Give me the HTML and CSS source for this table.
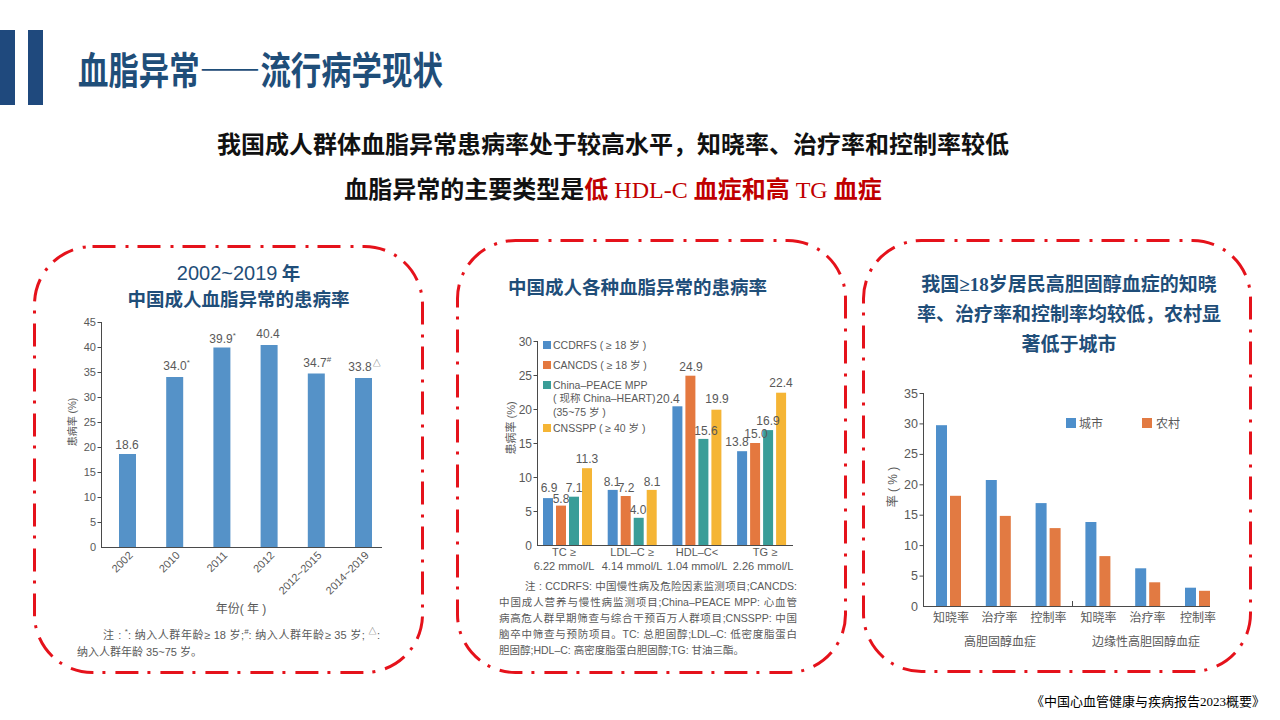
FILE: index.html
```html
<!DOCTYPE html>
<html lang="zh-CN">
<head>
<meta charset="utf-8">
<title>血脂异常——流行病学现状</title>
<link rel="stylesheet" href="styles.css">
</head>
<body>
<div class="slide">
  <header class="head">
    <span class="bar"></span><span class="bar"></span>
    <h1>血脂异常——流行病学现状</h1>
  </header>

  <div class="summary">
    <p>我国成人群体血脂异常患病率处于较高水平，知晓率、治疗率和控制率较低</p>
    <p>血脂异常的主要类型是<span class="red">低 <span class="lat">HDL-C</span> 血症和高 <span class="lat">TG</span> 血症</span></p>
  </div>

  <div class="panels">
    <!-- Panel 1 -->
    <section class="panel p1">
      <svg class="frame" width="391" height="429" viewBox="0 0 391 429"><rect x="1.5" y="1.5" width="388" height="426" rx="58"/></svg>
      <h2><span class="yr">2002~2019</span> 年<br>中国成人血脂异常的患病率</h2>
      <svg class="chart" width="391" height="315" viewBox="33 312 391 315">
        <g class="axis">
          <line x1="101.5" y1="322" x2="101.5" y2="548"/>
          <line x1="101" y1="547.5" x2="382" y2="547.5"/>
          <line x1="97.5" y1="322.5" x2="101.5" y2="322.5"/>
          <line x1="97.5" y1="347.5" x2="101.5" y2="347.5"/>
          <line x1="97.5" y1="372.5" x2="101.5" y2="372.5"/>
          <line x1="97.5" y1="397.5" x2="101.5" y2="397.5"/>
          <line x1="97.5" y1="422.5" x2="101.5" y2="422.5"/>
          <line x1="97.5" y1="447.5" x2="101.5" y2="447.5"/>
          <line x1="97.5" y1="472.5" x2="101.5" y2="472.5"/>
          <line x1="97.5" y1="497.5" x2="101.5" y2="497.5"/>
          <line x1="97.5" y1="522.5" x2="101.5" y2="522.5"/>
        </g>
        <g class="yt s11" text-anchor="end">
          <text x="96" y="326">45</text>
          <text x="96" y="351">40</text>
          <text x="96" y="376">35</text>
          <text x="96" y="401">30</text>
          <text x="96" y="426">25</text>
          <text x="96" y="451">20</text>
          <text x="96" y="476">15</text>
          <text x="96" y="501">10</text>
          <text x="96" y="526">5</text>
          <text x="96" y="551">0</text>
        </g>
        <g class="b-left">
          <rect x="119" y="454" width="17" height="93"/>
          <rect x="166.2" y="377" width="17" height="170"/>
          <rect x="213.4" y="347.5" width="17" height="199.5"/>
          <rect x="260.6" y="345" width="17" height="202"/>
          <rect x="307.8" y="373.5" width="17" height="173.5"/>
          <rect x="355" y="378" width="17" height="169"/>
        </g>
        <g class="val s12">
          <text x="115.3" y="448.5">18.6</text>
          <text x="163.3" y="369.5">34.0<tspan class="sup" dy="-5">*</tspan></text>
          <text x="209.3" y="342.5">39.9<tspan class="sup" dy="-5">*</tspan></text>
          <text x="256.3" y="337.5">40.4</text>
          <text x="303.3" y="366.5">34.7<tspan class="sup" dy="-5">#</tspan></text>
          <text x="348.3" y="370.5">33.8<tspan class="sup" dx="1" dy="-5">△</tspan></text>
        </g>
        <g class="xl s11" text-anchor="end">
          <text transform="translate(133.5 556) rotate(-45)">2002</text>
          <text transform="translate(180.7 556) rotate(-45)">2010</text>
          <text transform="translate(228 556) rotate(-45)">2011</text>
          <text transform="translate(275.1 556) rotate(-45)">2012</text>
          <text transform="translate(322.3 556) rotate(-45)">2012~2015</text>
          <text transform="translate(369.5 556) rotate(-45)">2014~2019</text>
        </g>
        <text class="s12" x="241" y="613" text-anchor="middle">年份( 年 )</text>
        <text class="s10" x="72" y="422" dy="3.5" text-anchor="middle" transform="rotate(-90 72 422)">患病率 (%)</text>
      </svg>
      <p class="note n1">
        <span class="ln first">注 : <sup>*</sup>: 纳入人群年龄≥ 18 岁;<sup>#</sup>: 纳入人群年龄≥ 35 岁; <sup>△</sup>:</span>
        <span class="ln last">纳入人群年龄 35~75 岁。</span>
      </p>
    </section>

    <!-- Panel 2 -->
    <section class="panel p2">
      <svg class="frame" width="391" height="435" viewBox="0 0 391 435"><rect x="1.5" y="1.5" width="388" height="432" rx="58"/></svg>
      <h2>中国成人各种血脂异常的患病率</h2>
      <svg class="chart" width="391" height="245" viewBox="456 330 391 245">
        <g class="axis">
          <line x1="537.5" y1="342" x2="537.5" y2="547"/>
          <line x1="537" y1="546.5" x2="793" y2="546.5"/>
          <line x1="533.5" y1="342.5" x2="537.5" y2="342.5"/>
          <line x1="533.5" y1="376.5" x2="537.5" y2="376.5"/>
          <line x1="533.5" y1="410.5" x2="537.5" y2="410.5"/>
          <line x1="533.5" y1="444.5" x2="537.5" y2="444.5"/>
          <line x1="533.5" y1="478.5" x2="537.5" y2="478.5"/>
          <line x1="533.5" y1="512.5" x2="537.5" y2="512.5"/>
        </g>
        <g class="yt s12" text-anchor="end">
          <text x="532" y="346.5">30</text>
          <text x="532" y="380.5">25</text>
          <text x="532" y="414.5">20</text>
          <text x="532" y="448.5">15</text>
          <text x="532" y="482.5">10</text>
          <text x="532" y="516.5">5</text>
          <text x="532" y="550.5">0</text>
        </g>
        <g class="c-blue">
          <rect x="543" y="499.1" width="10" height="46.9"/>
          <rect x="607.7" y="490.9" width="10" height="55.1"/>
          <rect x="672.4" y="407.3" width="10" height="138.7"/>
          <rect x="737.1" y="452.2" width="10" height="93.8"/>
        </g>
        <g class="c-orange">
          <rect x="556" y="506.6" width="10" height="39.4"/>
          <rect x="620.7" y="497" width="10" height="49"/>
          <rect x="685.4" y="376.7" width="10" height="169.3"/>
          <rect x="750.1" y="444" width="10" height="102"/>
        </g>
        <g class="c-teal">
          <rect x="569" y="497.7" width="10" height="48.3"/>
          <rect x="633.7" y="518.8" width="10" height="27.2"/>
          <rect x="698.4" y="439.9" width="10" height="106.1"/>
          <rect x="763.1" y="431.1" width="10" height="114.9"/>
        </g>
        <g class="c-yellow">
          <rect x="582" y="469.2" width="10" height="76.8"/>
          <rect x="646.7" y="490.9" width="10" height="55.1"/>
          <rect x="711.4" y="410.7" width="10" height="135.3"/>
          <rect x="776.1" y="393.7" width="10" height="152.3"/>
        </g>
        <g class="val s12" text-anchor="middle">
          <text x="549" y="493.3">6.9</text>
          <text x="561" y="504.3">5.8</text>
          <text x="574" y="493.3">7.1</text>
          <text x="587" y="464.3">11.3</text>
          <text x="612" y="487.3">8.1</text>
          <text x="626" y="493.3">7.2</text>
          <text x="638" y="515.3">4.0</text>
          <text x="652" y="487.3">8.1</text>
          <text x="668" y="404.3">20.4</text>
          <text x="691" y="372.3">24.9</text>
          <text x="706" y="436.3">15.6</text>
          <text x="717" y="404.3">19.9</text>
          <text x="737" y="447.3">13.8</text>
          <text x="756" y="439">15.0</text>
          <text x="768" y="426">16.9</text>
          <text x="781" y="388.3">22.4</text>
        </g>
        <g class="legend s105">
          <rect class="c-blue" x="543" y="342" width="8" height="8"/>
          <text x="553" y="350">CCDRFS ( ≥ 18 岁 )</text>
          <rect class="c-orange" x="543" y="362" width="8" height="8"/>
          <text x="553" y="370">CANCDS ( ≥ 18 岁 )</text>
          <rect class="c-teal" x="543" y="382" width="8" height="8"/>
          <text x="553" y="390">China–PEACE MPP</text>
          <text x="553" y="403">( 现称 China–HEART)</text>
          <text x="553" y="417">(35~75 岁 )</text>
          <rect class="c-yellow" x="543" y="425" width="8" height="8"/>
          <text x="553" y="433">CNSSPP ( ≥ 40 岁 )</text>
        </g>
        <g class="xl s11" text-anchor="middle">
          <text x="564" y="557">TC ≥</text>
          <text x="564" y="571">6.22 mmol/L</text>
          <text x="632" y="557">LDL–C ≥</text>
          <text x="632" y="571">4.14 mmol/L</text>
          <text x="697" y="557">HDL–C&lt;</text>
          <text x="697" y="571">1.04 mmol/L</text>
          <text x="765" y="557">TG ≥</text>
          <text x="763" y="571">2.26 mmol/L</text>
        </g>
        <text class="s11" x="511" y="429" dy="4" text-anchor="middle" transform="rotate(-90 511 429)">患病率 (%)</text>
      </svg>
      <p class="note n2">
        <span class="ln first">注 : CCDRFS: 中国慢性病及危险因素监测项目;CANCDS:</span>
        <span class="ln">中国成人营养与慢性病监测项目;China–PEACE MPP: 心血管</span>
        <span class="ln">病高危人群早期筛查与综合干预百万人群项目;CNSSPP: 中国</span>
        <span class="ln">脑卒中筛查与预防项目。TC: 总胆固醇;LDL–C: 低密度脂蛋白</span>
        <span class="ln last">胆固醇;HDL–C: 高密度脂蛋白胆固醇;TG: 甘油三酯。</span>
      </p>
    </section>

    <!-- Panel 3 -->
    <section class="panel p3">
      <svg class="frame" width="390" height="434" viewBox="0 0 390 434"><rect x="1.5" y="1.5" width="387" height="431" rx="58"/></svg>
      <h2>我国≥18岁居民高胆固醇血症的知晓<br>率、治疗率和控制率均较低，农村显<br>著低于城市</h2>
      <svg class="chart" width="390" height="270" viewBox="862 380 390 270">
        <g class="axis">
          <line x1="923.5" y1="394" x2="923.5" y2="608"/>
          <line x1="923" y1="607.5" x2="1210" y2="607.5"/>
          <line x1="919.5" y1="394.5" x2="923.5" y2="394.5"/>
          <line x1="919.5" y1="424.9" x2="923.5" y2="424.9"/>
          <line x1="919.5" y1="455.4" x2="923.5" y2="455.4"/>
          <line x1="919.5" y1="485.8" x2="923.5" y2="485.8"/>
          <line x1="919.5" y1="516.2" x2="923.5" y2="516.2"/>
          <line x1="919.5" y1="546.6" x2="923.5" y2="546.6"/>
          <line x1="919.5" y1="577.1" x2="923.5" y2="577.1"/>
          <line x1="1072.5" y1="602" x2="1072.5" y2="607"/>
        </g>
        <g class="yt s125" text-anchor="end">
          <text x="918" y="398.5">35</text>
          <text x="918" y="428.9">30</text>
          <text x="918" y="459.4">25</text>
          <text x="918" y="489.8">20</text>
          <text x="918" y="520.2">15</text>
          <text x="918" y="550.6">10</text>
          <text x="918" y="581.1">5</text>
          <text x="918" y="611.5">0</text>
        </g>
        <g class="r-blue">
          <rect x="936" y="426.2" width="11" height="180.8"/>
          <rect x="985.8" y="481" width="11" height="126"/>
          <rect x="1035.6" y="504.1" width="11" height="102.9"/>
          <rect x="1085.4" y="523" width="11" height="84"/>
          <rect x="1135.2" y="569.3" width="11" height="37.7"/>
          <rect x="1185" y="588.7" width="11" height="18.3"/>
        </g>
        <g class="r-orange">
          <rect x="950" y="496.8" width="11" height="110.2"/>
          <rect x="999.8" y="516.9" width="11" height="90.1"/>
          <rect x="1049.6" y="529.1" width="11" height="77.9"/>
          <rect x="1099.4" y="557.1" width="11" height="49.9"/>
          <rect x="1149.2" y="583.3" width="11" height="23.7"/>
          <rect x="1199" y="591.8" width="11" height="15.2"/>
        </g>
        <rect class="r-blue" x="1066" y="419" width="10" height="10"/>
        <text class="s12" x="1079" y="428.5">城市</text>
        <rect class="r-orange" x="1142" y="419" width="10" height="10"/>
        <text class="s12" x="1156" y="428.5">农村</text>
        <g class="xl s12" text-anchor="middle">
          <text x="951" y="622.5">知晓率</text>
          <text x="999.5" y="622.5">治疗率</text>
          <text x="1048.5" y="622.5">控制率</text>
          <text x="1098.5" y="622.5">知晓率</text>
          <text x="1147.5" y="622.5">治疗率</text>
          <text x="1198" y="622.5">控制率</text>
          <text x="1000" y="646.5">高胆固醇血症</text>
          <text x="1146" y="646.5">边缘性高胆固醇血症</text>
        </g>
        <text class="s12" x="893" y="488" dy="4" text-anchor="middle" transform="rotate(-90 893 488)">率 ( % )</text>
      </svg>
    </section>
  </div>

  <footer class="source">《中国心血管健康与疾病报告2023概要》</footer>
</div>
</body>
</html>
```

FILE: styles.css
```css
* {
  box-sizing: border-box;
  margin: 0;
  padding: 0;
}

html,
body {
  width: 1280px;
  height: 720px;
  overflow: hidden;
  background: #ffffff;
}

body {
  font-family: "Noto Sans CJK SC", sans-serif;
  color: #000000;
}

.slide {
  width: 1280px;
  height: 720px;
}

/* ---------- header ---------- */
.head {
  display: flex;
  align-items: center;
  height: 75px;
  margin-top: 30px;
}

.head .bar {
  width: 15px;
  height: 75px;
  background: #1f497d;
}

.head .bar + .bar {
  margin-left: 13px;
}

.head h1 {
  margin-left: 35px;
  font-size: 38px;
  line-height: 1;
  font-weight: 700;
  color: #1f4e79;
  white-space: nowrap;
  transform: scaleX(0.8);
  transform-origin: left center;
}

/* ---------- summary ---------- */
.summary {
  margin-top: 18px;
  padding-right: 54px;
  text-align: center;
  font-family: "Liberation Serif", "Noto Sans CJK SC", serif;
  font-size: 24px;
  font-weight: 700;
  line-height: 45px;
  color: #111111;
}

.summary .red {
  color: #c00000;
}

.summary .lat {
  font-weight: 400;
}

/* ---------- panels ---------- */
.panels {
  display: flex;
  align-items: flex-start;
  margin-top: 26px;
  padding-left: 33px;
}

.panel {
  position: relative;
  flex: none;
}

.p1 {
  width: 391px;
  height: 429px;
  margin-top: 6px;
  margin-right: 32px;
}

.p2 {
  width: 391px;
  height: 435px;
  margin-right: 15px;
}

.p3 {
  width: 390px;
  height: 434px;
}

.frame {
  position: absolute;
  left: 0;
  top: 0;
}

.frame rect {
  fill: none;
  stroke: #e5121b;
  stroke-width: 3;
  stroke-dasharray: 23 10 3 9;
}

.panel h2 {
  font-size: 18.5px;
  font-weight: 700;
  color: #1f4e79;
  line-height: 25px;
}

.p1 h2 {
  padding-top: 15px;
  padding-left: 20px;
  text-align: center;
}

.p1 h2 .yr {
  font-family: "Liberation Sans", sans-serif;
  font-size: 20px;
  font-weight: 400;
}

.p2 h2 {
  padding-top: 35px;
  padding-left: 52px;
}

.p3 h2 {
  padding-top: 31px;
  padding-left: 24px;
  text-align: center;
  font-size: 19px;
  line-height: 30px;
  font-family: "Liberation Serif", "Noto Sans CJK SC", serif;
}

.chart {
  display: block;
}

.p1 .chart {
  margin-top: 1px;
}

.p2 .chart {
  margin-top: 30px;
}

.p3 .chart {
  margin-top: 19px;
}

.chart text {
  font-family: "Liberation Sans", "Noto Sans CJK SC", sans-serif;
  fill: #595959;
}

.chart .s10 { font-size: 10px; }
.chart .s105 { font-size: 10.5px; }
.chart .s11 { font-size: 11px; }
.chart .s12 { font-size: 12px; }
.chart .s125 { font-size: 12.5px; }

.chart .sup {
  font-size: 8px;
}

.axis line {
  stroke: #4a4a4a;
  stroke-width: 1;
}

.b-left rect { fill: #5592c8; }
.c-blue, .c-blue rect { fill: #4d8dc9; }
.c-orange, .c-orange rect { fill: #e4783f; }
.c-teal, .c-teal rect { fill: #3a9d98; }
.c-yellow, .c-yellow rect { fill: #f5b535; }
.r-blue, .r-blue rect { fill: #4e8fcb; }
.r-orange, .r-orange rect { fill: #e27a42; }

/* ---------- notes ---------- */
.note {
  font-family: "Liberation Sans", "Noto Sans CJK SC", sans-serif;
  color: #595959;
}

.note .ln {
  display: block;
  text-align: justify;
  text-align-last: justify;
}

.note .ln.last {
  text-align-last: left;
}

.note .first {
  text-indent: 26px;
}

.note sup {
  font-size: 8px;
  line-height: 0;
}

.n1 {
  margin-left: 44px;
  width: 303px;
  font-size: 11px;
  line-height: 17px;
}

.n2 {
  margin-top: 4px;
  margin-left: 43px;
  width: 298px;
  font-size: 10.5px;
  line-height: 16px;
}

/* ---------- footer ---------- */
.source {
  margin-top: 18px;
  padding-right: 15px;
  text-align: right;
  font-family: "Liberation Serif", "Noto Sans CJK SC", serif;
  font-size: 13px;
  line-height: 20px;
  color: #000000;
}
```
